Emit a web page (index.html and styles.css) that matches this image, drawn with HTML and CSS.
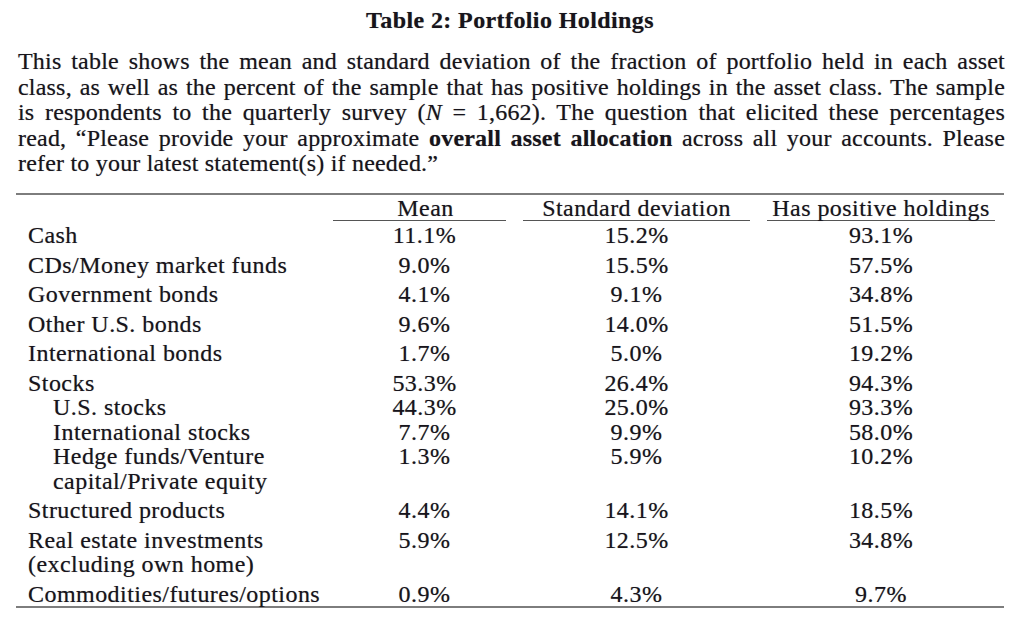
FILE: index.html
```html
<!DOCTYPE html>
<html lang="en">
<head>
<meta charset="utf-8">
<title>Table 2: Portfolio Holdings</title>
<link rel="stylesheet" href="styles.css">
</head>
<body>
<div class="page">
  <h1 class="title">Table 2: Portfolio Holdings</h1>
  <div class="caption">
    <span class="jl">This table shows the mean and standard deviation of the fraction of portfolio held in each asset</span>
    <span class="jl">class, as well as the percent of the sample that has positive holdings in the asset class. The sample</span>
    <span class="jl">is respondents to the quarterly survey (<i>N</i> = 1,662). The question that elicited these percentages</span>
    <span class="jl">read, “Please provide your approximate <b>overall asset allocation</b> across all your accounts. Please</span>
    <span class="last">refer to your latest statement(s) if needed.”</span>
  </div>
  <div class="table">
    <div class="row head">
      <div class="label"></div>
      <div class="hcell mean">Mean</div>
      <div class="hcell">Standard deviation</div>
      <div class="hcell">Has positive holdings</div>
    </div>
    <div class="row first">
      <div class="label">Cash</div><div class="num mean">11.1%</div><div class="num">15.2%</div><div class="num">93.1%</div>
    </div>
    <div class="row">
      <div class="label">CDs/Money market funds</div><div class="num mean">9.0%</div><div class="num">15.5%</div><div class="num">57.5%</div>
    </div>
    <div class="row">
      <div class="label">Government bonds</div><div class="num mean">4.1%</div><div class="num">9.1%</div><div class="num">34.8%</div>
    </div>
    <div class="row">
      <div class="label">Other U.S. bonds</div><div class="num mean">9.6%</div><div class="num">14.0%</div><div class="num">51.5%</div>
    </div>
    <div class="row">
      <div class="label">International bonds</div><div class="num mean">1.7%</div><div class="num">5.0%</div><div class="num">19.2%</div>
    </div>
    <div class="row">
      <div class="label">Stocks</div><div class="num mean">53.3%</div><div class="num">26.4%</div><div class="num">94.3%</div>
    </div>
    <div class="row sub">
      <div class="label">U.S. stocks</div><div class="num mean">44.3%</div><div class="num">25.0%</div><div class="num">93.3%</div>
    </div>
    <div class="row sub">
      <div class="label">International stocks</div><div class="num mean">7.7%</div><div class="num">9.9%</div><div class="num">58.0%</div>
    </div>
    <div class="row sub">
      <div class="label">Hedge funds/Venture<br>capital/Private equity</div><div class="num mean">1.3%</div><div class="num">5.9%</div><div class="num">10.2%</div>
    </div>
    <div class="row">
      <div class="label">Structured products</div><div class="num mean">4.4%</div><div class="num">14.1%</div><div class="num">18.5%</div>
    </div>
    <div class="row">
      <div class="label">Real estate investments<br>(excluding own home)</div><div class="num mean">5.9%</div><div class="num">12.5%</div><div class="num">34.8%</div>
    </div>
    <div class="row">
      <div class="label">Commodities/futures/options</div><div class="num mean">0.9%</div><div class="num">4.3%</div><div class="num">9.7%</div>
    </div>
  </div>
</div>
</body>
</html>
```
FILE: styles.css
```css
html, body {
  margin: 0;
  padding: 0;
  background: #ffffff;
}

body {
  font-family: "Liberation Serif", "Times New Roman", serif;
  color: #17141b;
  font-size: 24px;
  text-shadow: 0 0 0.7px rgba(20, 15, 25, 0.45);
}

.page {
  width: 988px;
  padding: 8px 0 0 16px;
}

.title {
  margin: 0;
  font-size: 24px;
  line-height: 25px;
  font-weight: bold;
  text-align: center;
  letter-spacing: 0.4px;
}

.caption {
  margin: 16px 0 0 2px;
  width: 987px;
  line-height: 25.5px;
  letter-spacing: 0.2px;
}

.caption .jl {
  display: block;
  text-align: justify;
  text-align-last: justify;
}

.caption .last {
  display: block;
}

.table {
  margin-top: 16px;
  border-top: 2px solid #7d7d7d;
  border-bottom: 2px solid #7d7d7d;
  letter-spacing: 0.45px;
}

.row {
  display: grid;
  grid-template-columns: 300px 173px 227px 228px;
  column-gap: 17px;
  line-height: 24.5px;
  padding-top: 5px;
}

.row.head {
  padding-top: 1px;
}

.row.first {
  padding-top: 2px;
}

.row.sub {
  padding-top: 0;
}

.label {
  padding-left: 12px;
  white-space: nowrap;
}

.row.sub .label {
  padding-left: 37px;
}

.hcell {
  text-align: center;
  border-bottom: 1.5px solid #555;
}

.num {
  text-align: center;
}

.num.mean {
  padding-left: 10px;
}

.hcell.mean {
  padding-left: 12px;
}
```
